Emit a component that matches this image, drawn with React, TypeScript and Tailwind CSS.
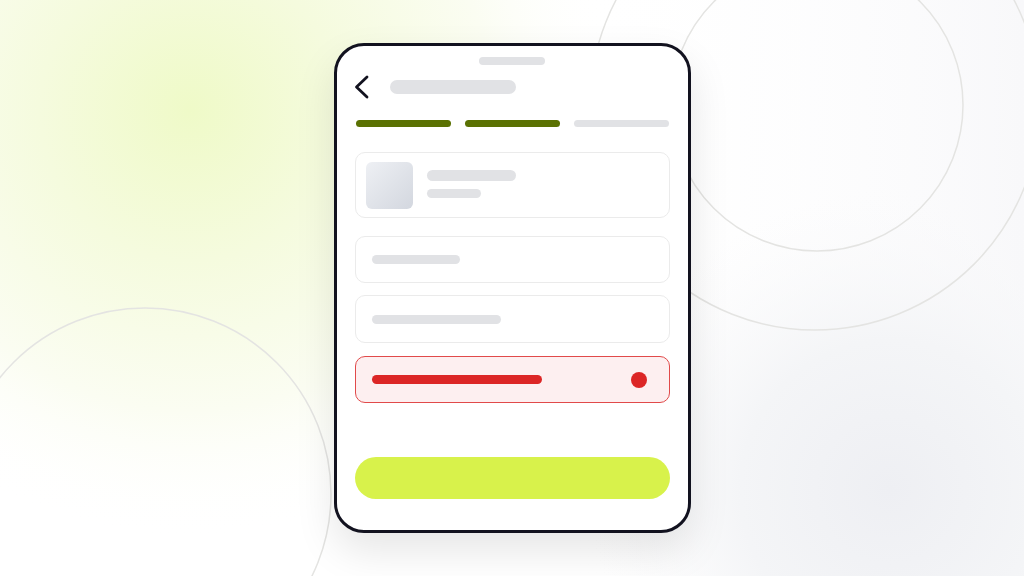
import React from "react";

function Backdrop() {
  return (
    <svg className="absolute inset-0 h-full w-full" viewBox="0 0 1024 576" preserveAspectRatio="none">
      <defs>
        <radialGradient id="g1" cx="190" cy="110" r="430" gradientUnits="userSpaceOnUse">
          <stop offset="0" stopColor="#effac8" />
          <stop offset="0.35" stopColor="#f5fbde" />
          <stop offset="0.7" stopColor="#fbfdf2" />
          <stop offset="1" stopColor="#ffffff" stopOpacity="0" />
        </radialGradient>
        <radialGradient id="g2" cx="890" cy="490" r="300" gradientUnits="userSpaceOnUse">
          <stop offset="0" stopColor="#eeeff3" />
          <stop offset="0.5" stopColor="#f4f5f7" />
          <stop offset="1" stopColor="#fafafb" stopOpacity="0" />
        </radialGradient>
        <linearGradient id="g3" x1="0" y1="0" x2="1" y2="0">
          <stop offset="0" stopColor="#ffffff" stopOpacity="0" />
          <stop offset="0.55" stopColor="#ffffff" stopOpacity="0" />
          <stop offset="1" stopColor="#f8f8fa" />
        </linearGradient>
      </defs>
      <rect x="0" y="0" width="1024" height="576" fill="#ffffff" />
      <rect x="0" y="0" width="1024" height="576" fill="url(#g3)" />
      <rect x="0" y="0" width="1024" height="576" fill="url(#g2)" />
      <rect x="0" y="0" width="1024" height="576" fill="url(#g1)" />
      <circle cx="817" cy="105" r="146" fill="none" stroke="#e4e4e2" strokeWidth="1.5" />
      <circle cx="815" cy="105" r="225" fill="none" stroke="#e4e4e2" strokeWidth="1.5" />
      <circle cx="145" cy="494" r="186" fill="none" stroke="#e4e4e2" strokeWidth="1.5" />
    </svg>
  );
}

export default function App() {
  return (
    <div className="relative h-[576px] w-[1024px] overflow-hidden bg-white" style={{ fontFamily: "Inter, sans-serif" }}>
      <Backdrop />
      <div className="relative flex h-full w-full items-center justify-center">
        <div className="flex h-[490px] w-[357px] flex-col rounded-[30px] border-[3px] border-[#12121f] bg-white px-[18px] shadow-[0_18px_40px_rgba(0,0,0,0.10)]">
          <div className="mx-auto mt-[11px] h-[8px] w-[66px] rounded-full bg-[#e1e2e5]" />
          <div className="mt-[10px] flex h-[24px] items-center">
            <svg width="15" height="24" viewBox="0 0 15 24" className="ml-[-1px]">
              <path d="M13 2 L2.5 12 L13 22" fill="none" stroke="#12121f" strokeWidth="2.8" strokeLinecap="round" strokeLinejoin="round" />
            </svg>
            <div className="ml-[21px] h-[14px] w-[126px] rounded-full bg-[#e1e2e5]" />
          </div>
          <div className="mt-[21px] flex gap-[14px] px-[1px]">
            <div className="h-[7px] flex-1 rounded-full bg-[#5a7102]" />
            <div className="h-[7px] flex-1 rounded-full bg-[#5a7102]" />
            <div className="h-[7px] flex-1 rounded-full bg-[#e1e2e5]" />
          </div>
          <div className="mt-[25px] flex h-[66px] items-center rounded-[10px] border border-[#ebebeb] px-[10px]">
            <div className="h-[47px] w-[47px] rounded-[6px] bg-gradient-to-br from-[#eef0f4] to-[#d3d7df]" />
            <div className="ml-[14px] flex flex-col gap-[8px] pb-[3px]">
              <div className="h-[11px] w-[89px] rounded-full bg-[#e1e2e5]" />
              <div className="h-[9px] w-[54px] rounded-full bg-[#e1e2e5]" />
            </div>
          </div>
          <div className="mt-[18px] flex h-[47px] items-center rounded-[10px] border border-[#ebebeb] px-[16px]">
            <div className="h-[9px] w-[88px] rounded-full bg-[#e1e2e5]" />
          </div>
          <div className="mt-[12px] flex h-[48px] items-center rounded-[10px] border border-[#ebebeb] px-[16px]">
            <div className="h-[9px] w-[129px] rounded-full bg-[#e1e2e5]" />
          </div>
          <div className="mt-[13px] flex h-[47px] items-center justify-between rounded-[10px] border border-[#e14a4a] bg-[#fdeff0] pl-[16px] pr-[22px]">
            <div className="h-[9px] w-[170px] rounded-full bg-[#dc2626]" />
            <div className="h-[16px] w-[16px] rounded-full bg-[#dc2626]" />
          </div>
          <div className="mt-[54px] h-[42px] rounded-full bg-[#d8f24b]" />
        </div>
      </div>
    </div>
  );
}
